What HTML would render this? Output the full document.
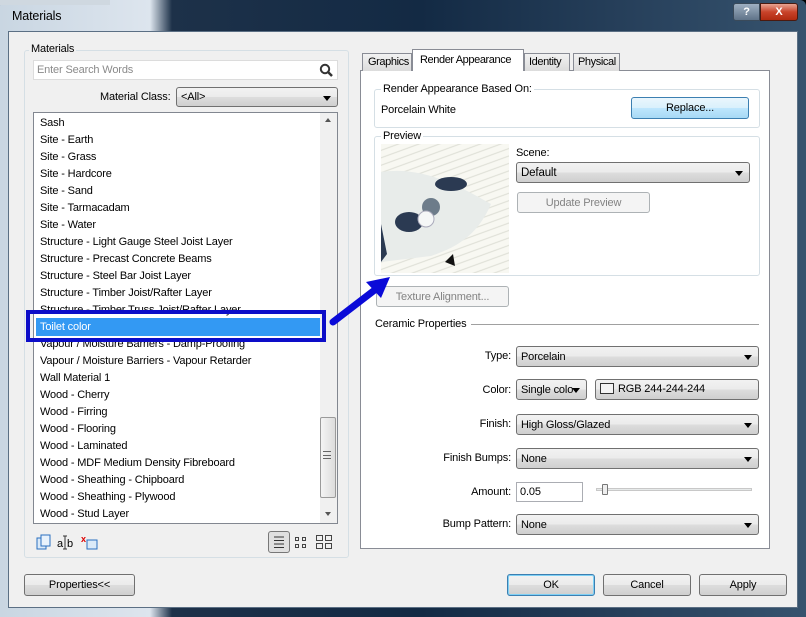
<!DOCTYPE html>
<html><head><meta charset="utf-8"><style>
*{box-sizing:border-box;margin:0;padding:0}
body{width:806px;height:617px;overflow:hidden;background:#000;font-family:"Liberation Sans",sans-serif;font-size:11px;color:#000;position:relative;letter-spacing:-0.15px}
.a{position:absolute}
.frame{left:0;top:0;width:806px;height:617px;background:linear-gradient(90deg,#c9d6e2 0,#dde5ee 150px,#1d3149 172px,#132a44 420px,#263f5a 620px,#36536e 806px);border-radius:6px 6px 0 0}
.client{left:8px;top:31px;width:790px;height:577px;background:#f0f0f0;border:1px solid #5b6f84}
.grp{border:1px solid #d5dfe5;border-radius:3px}
.lbl{background:#f0f0f0;padding:0 2px}
.btn{border:1px solid #707070;border-radius:3px;background:linear-gradient(#f2f2f2,#ebebeb 50%,#dddddd 51%,#cfcfcf);text-align:center;line-height:21px}
.dis{border:1px solid #adb2b5;border-radius:3px;background:#f4f4f4;color:#838383;text-align:center;line-height:20px}
.cb{border:1px solid #707070;border-radius:3px;background:linear-gradient(#f2f2f2,#ebebeb 50%,#dddddd 51%,#cfcfcf);padding-left:4px;line-height:20px;font-size:11px;overflow:hidden;white-space:nowrap}
.cb:after{content:"";position:absolute;right:6px;top:8px;border-left:4px solid transparent;border-right:4px solid transparent;border-top:5px solid #000}
.li{left:40px;height:17px;line-height:17px;font-size:11px}
.r{text-align:right;width:140px;left:371px;font-size:11px}
</style></head><body>
<div class="a frame"></div>
<div class="a" style="left:0;top:0;width:110px;height:5px;background:#cfd8e0"></div>
<div class="a" style="left:12px;top:9px;font-size:12.5px">Materials</div>
<div class="a" style="left:733px;top:3px;width:27px;height:18px;border:1px solid #3a4a5a;border-radius:3px 0 0 3px;background:linear-gradient(#9fb0c2,#5f7388);color:#fff;text-align:center;font-weight:bold;line-height:16px">?</div>
<div class="a" style="left:760px;top:3px;width:38px;height:18px;border:1px solid #4a1a10;border-radius:0 3px 3px 0;background:linear-gradient(#e8a493,#c8432a 50%,#b02a10);color:#fff;text-align:center;font-weight:bold;line-height:16px">X</div>
<div class="a client"></div>

<div class="a grp" style="left:24px;top:50px;width:325px;height:508px"></div>
<div class="a lbl" style="left:29px;top:43px">Materials</div>
<div class="a" style="left:33px;top:60px;width:305px;height:20px;background:#fff;border:1px solid #dcdcdc;color:#8a8a8a;padding-left:3px;line-height:18px">Enter Search Words</div>
<svg class="a" style="left:319px;top:63px" width="14" height="14"><circle cx="6" cy="6" r="4.2" fill="none" stroke="#333" stroke-width="2"/><path d="M9 9l4 4" stroke="#333" stroke-width="2.5"/></svg>
<div class="a" style="left:100px;top:91px">Material Class:</div>
<div class="a cb" style="left:176px;top:87px;width:162px;height:20px;line-height:19px">&lt;All&gt;</div>
<div class="a" style="left:33px;top:112px;width:305px;height:412px;background:#fff;border:1px solid #828790"></div>
<div class="a" style="left:320px;top:113px;width:17px;height:410px;background:#f0f0f0"></div>
<div class="a" style="left:320px;top:417px;width:16px;height:81px;border:1px solid #9a9a9a;border-radius:2px;background:linear-gradient(90deg,#f4f4f4,#dcdcdc)"></div>
<div class="a" style="left:323px;top:451px;width:8px;height:8px;border-top:1px solid #666;border-bottom:1px solid #666"><div style="border-top:1px solid #666;margin-top:3px"></div></div>
<div class="a" style="left:325px;top:118px;border-left:3px solid transparent;border-right:3px solid transparent;border-bottom:4px solid #555"></div>
<div class="a" style="left:325px;top:512px;border-left:3px solid transparent;border-right:3px solid transparent;border-top:4px solid #555"></div>
<div class="a li" style="top:115px">Sash</div>
<div class="a li" style="top:132px">Site - Earth</div>
<div class="a li" style="top:149px">Site - Grass</div>
<div class="a li" style="top:166px">Site - Hardcore</div>
<div class="a li" style="top:183px">Site - Sand</div>
<div class="a li" style="top:200px">Site - Tarmacadam</div>
<div class="a li" style="top:217px">Site - Water</div>
<div class="a li" style="top:234px">Structure - Light Gauge Steel Joist Layer</div>
<div class="a li" style="top:251px">Structure - Precast Concrete Beams</div>
<div class="a li" style="top:268px">Structure - Steel Bar Joist Layer</div>
<div class="a li" style="top:285px">Structure - Timber Joist/Rafter Layer</div>
<div class="a li" style="top:302px">Structure - Timber Truss Joist/Rafter Layer</div>
<div class="a li" style="top:336px">Vapour / Moisture Barriers - Damp-Proofing</div>
<div class="a li" style="top:353px">Vapour / Moisture Barriers - Vapour Retarder</div>
<div class="a li" style="top:370px">Wall Material 1</div>
<div class="a li" style="top:387px">Wood - Cherry</div>
<div class="a li" style="top:404px">Wood - Firring</div>
<div class="a li" style="top:421px">Wood - Flooring</div>
<div class="a li" style="top:438px">Wood - Laminated</div>
<div class="a li" style="top:455px">Wood - MDF Medium Density Fibreboard</div>
<div class="a li" style="top:472px">Wood - Sheathing - Chipboard</div>
<div class="a li" style="top:489px">Wood - Sheathing - Plywood</div>
<div class="a li" style="top:506px">Wood - Stud Layer</div>
<div class="a" style="left:26px;top:310px;width:300px;height:32px;border:4px solid #0d0dc8"></div>
<div class="a" style="left:36px;top:318px;width:284px;height:18px;background:#3399f3;color:#fff;padding-left:4px;line-height:18px">Toilet color</div>
<svg class="a" style="left:35px;top:533px" width="70" height="18">
<rect x="2" y="5" width="9" height="11" fill="#dbeaf8" stroke="#2a6fc0"/><rect x="6" y="2" width="9" height="11" fill="#e8f2fc" stroke="#2a6fc0"/>
<text x="22" y="14" font-size="11" font-family="Liberation Sans">a</text><path d="M30 3v13M28 3h4M28 16h4" stroke="#333"/><text x="32" y="14" font-size="11" font-family="Liberation Sans">b</text>
<text x="46" y="9" font-size="9" fill="#d00" font-weight="bold" font-family="Liberation Sans">x</text><rect x="52" y="7" width="10" height="9" fill="#dbeaf8" stroke="#2a6fc0"/></svg>
<div class="a" style="left:268px;top:531px;width:22px;height:22px;border:1px solid #777;border-radius:3px;background:#e0e0e0"></div>
<svg class="a" style="left:268px;top:531px" width="70" height="22"><path d="M6 6h10M6 9.5h10M6 13h10M6 16.5h10" stroke="#333"/>
<g fill="none" stroke="#444"><rect x="27.5" y="6.5" width="3" height="3"/><rect x="34.5" y="6.5" width="3" height="3"/><rect x="27.5" y="13.5" width="3" height="3"/><rect x="34.5" y="13.5" width="3" height="3"/>
<rect x="48.5" y="4.5" width="6" height="5"/><rect x="57.5" y="4.5" width="6" height="5"/><rect x="48.5" y="12.5" width="6" height="5"/><rect x="57.5" y="12.5" width="6" height="5"/></g></svg>

<div class="a" style="left:360px;top:70px;width:410px;height:479px;background:#fff;border:1px solid #898c95"></div>
<div class="a" style="left:362px;top:53px;width:50px;height:18px;border:1px solid #898c95;border-bottom:none;background:linear-gradient(#f2f2f2,#dcdcdc);padding-left:5px;line-height:17px;letter-spacing:-0.4px">Graphics</div>
<div class="a" style="left:412px;top:49px;width:112px;height:22px;border:1px solid #898c95;border-bottom:none;background:#fff;padding-left:7px;line-height:20px;letter-spacing:-0.4px">Render Appearance</div>
<div class="a" style="left:524px;top:53px;width:46px;height:18px;border:1px solid #898c95;border-bottom:none;background:linear-gradient(#f2f2f2,#dcdcdc);padding-left:4px;line-height:17px;letter-spacing:-0.4px">Identity</div>
<div class="a" style="left:573px;top:53px;width:47px;height:18px;border:1px solid #898c95;border-bottom:none;background:linear-gradient(#f2f2f2,#dcdcdc);padding-left:4px;line-height:17px;letter-spacing:-0.4px">Physical</div>

<div class="a grp" style="left:374px;top:89px;width:386px;height:39px"></div>
<div class="a" style="left:381px;top:83px;background:#fff;padding:0 2px">Render Appearance Based On:</div>
<div class="a" style="left:381px;top:104px">Porcelain White</div>
<div class="a btn" style="left:631px;top:97px;width:118px;height:22px;border-color:#3c7fb1;background:linear-gradient(#eaf6fd,#d9f0fc 50%,#bee6fd 51%,#a7d9f5)">Replace...</div>

<div class="a grp" style="left:374px;top:136px;width:386px;height:140px"></div>
<div class="a" style="left:381px;top:130px;background:#fff;padding:0 2px">Preview</div>
<div class="a" style="left:381px;top:144px;width:128px;height:129px;background:repeating-linear-gradient(160deg,#f8f8f2 0,#f8f8f2 5px,#dcddd4 6px,#f8f8f2 7px)"></div>
<svg class="a" style="left:381px;top:144px" width="128" height="129"><path d="M0 28 C40 22 75 40 110 60 C95 95 70 105 50 112 L0 118Z" fill="#e8ecea"/><ellipse cx="28" cy="78" rx="14" ry="10" fill="#2b3a52"/><ellipse cx="70" cy="40" rx="16" ry="7" fill="#2b3a52"/><circle cx="50" cy="63" r="9" fill="#6d7c8a"/><circle cx="45" cy="75" r="8" fill="#f5f7f7" stroke="#aab"/><path d="M0 80 L6 110 L0 118Z" fill="#2b3a52"/><path d="M64 118 L72 110 L74 122Z" fill="#111"/></svg>
<div class="a" style="left:516px;top:147px">Scene:</div>
<div class="a cb" style="left:516px;top:162px;width:234px;height:21px;font-size:11.5px">Default</div>
<div class="a dis" style="left:517px;top:192px;width:133px;height:21px">Update Preview</div>
<div class="a dis" style="left:376px;top:286px;width:133px;height:21px">Texture Alignment...</div>
<div class="a" style="left:375px;top:318px">Ceramic Properties</div>
<div class="a" style="left:471px;top:324px;width:288px;height:1px;background:#a0a0a0"></div>

<div class="a r" style="top:350px">Type:</div>
<div class="a cb" style="left:516px;top:346px;width:243px;height:21px">Porcelain</div>
<div class="a r" style="top:384px">Color:</div>
<div class="a cb" style="left:516px;top:379px;width:71px;height:21px;padding-right:18px">Single colo</div>
<div class="a btn" style="left:595px;top:379px;width:164px;height:21px;text-align:left;padding-left:22px;line-height:19px">RGB 244-244-244</div>
<div class="a" style="left:600px;top:383px;width:14px;height:11px;border:1px solid #333;background:#f4f4f4"></div>
<div class="a r" style="top:418px">Finish:</div>
<div class="a cb" style="left:516px;top:414px;width:243px;height:21px">High Gloss/Glazed</div>
<div class="a r" style="top:452px">Finish Bumps:</div>
<div class="a cb" style="left:516px;top:448px;width:243px;height:21px">None</div>
<div class="a r" style="top:486px">Amount:</div>
<div class="a" style="left:516px;top:482px;width:67px;height:20px;border:1px solid #abadb3;background:#fff;padding-left:3px;line-height:18px">0.05</div>
<div class="a" style="left:596px;top:488px;width:156px;height:3px;border:1px solid #c8c8c8;background:#e7eaea"></div>
<div class="a" style="left:602px;top:484px;width:6px;height:11px;border:1px solid #777;border-radius:1px;background:#eee"></div>
<div class="a r" style="top:518px">Bump Pattern:</div>
<div class="a cb" style="left:516px;top:514px;width:243px;height:21px">None</div>

<div class="a btn" style="left:24px;top:574px;width:111px;height:22px">Properties&lt;&lt;</div>
<div class="a btn" style="left:507px;top:574px;width:88px;height:22px;border-color:#3c7fb1;box-shadow:inset 0 0 0 1px #7ed0f5">OK</div>
<div class="a btn" style="left:603px;top:574px;width:88px;height:22px">Cancel</div>
<div class="a btn" style="left:699px;top:574px;width:88px;height:22px">Apply</div>

<svg class="a" style="left:320px;top:265px" width="80" height="75"><path d="M13 57 L56 24" stroke="#0a0ad8" stroke-width="7" stroke-linecap="round"/><path d="M70 12 L46 17 L61 33 Z" fill="#0a0ad8"/></svg>
</body></html>
